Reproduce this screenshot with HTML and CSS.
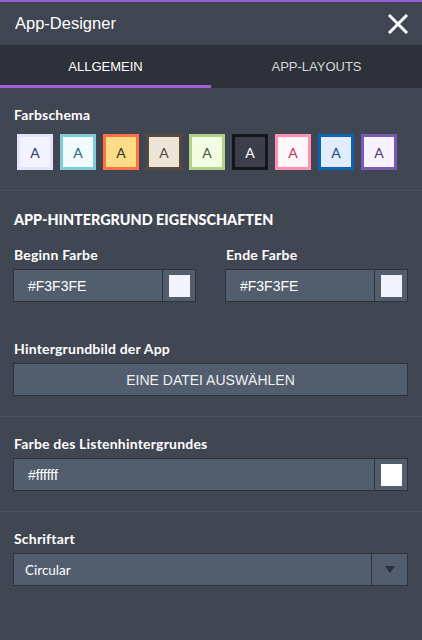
FILE: index.html
```html
<!DOCTYPE html>
<html>

<head>
  <title>App-Designer</title>
  <link rel="stylesheet" href="styles.css">
</head>

<body>
  <div class="panel">
    <div class="header">
      <span class="title">App-Designer</span>
      <button class="close-btn" aria-label="Schließen">
        <svg width="20" height="20" viewBox="0 0 20 20">
          <path d="M2 2 L18 18 M18 2 L2 18" stroke="#fff" stroke-width="3" stroke-linecap="square" fill="none"/>
        </svg>
      </button>
    </div>

    <div class="tabs">
      <div class="tab active">ALLGEMEIN</div>
      <div class="tab">APP-LAYOUTS</div>
    </div>

    <div class="section">
      <div class="label">Farbschema</div>
      <div class="schemes">
        <div class="scheme s1">A</div>
        <div class="scheme s2">A</div>
        <div class="scheme s3">A</div>
        <div class="scheme s4">A</div>
        <div class="scheme s5">A</div>
        <div class="scheme s6">A</div>
        <div class="scheme s7">A</div>
        <div class="scheme s8">A</div>
        <div class="scheme s9">A</div>
      </div>
    </div>

    <div class="section">
      <div class="heading">APP-HINTERGRUND EIGENSCHAFTEN</div>
      <div class="row">
        <div class="form-group">
          <div class="label">Beginn Farbe</div>
          <div class="color-input">
            <span class="value">#F3F3FE</span>
            <span class="swatch-box"><span class="swatch" style="background:#f3f3fe"></span></span>
          </div>
        </div>
        <div class="form-group">
          <div class="label">Ende Farbe</div>
          <div class="color-input">
            <span class="value">#F3F3FE</span>
            <span class="swatch-box"><span class="swatch" style="background:#f3f3fe"></span></span>
          </div>
        </div>
      </div>
      <div class="form-group spaced">
        <div class="label">Hintergrundbild der App</div>
        <button class="file-btn">EINE DATEI AUSWÄHLEN</button>
      </div>
    </div>

    <div class="section">
      <div class="label">Farbe des Listenhintergrundes</div>
      <div class="color-input">
        <span class="value">#ffffff</span>
        <span class="swatch-box"><span class="swatch" style="background:#ffffff"></span></span>
      </div>
    </div>

    <div class="section last">
      <div class="label">Schriftart</div>
      <div class="select">
        <span class="select-value">Circular</span>
        <span class="select-arrow"></span>
      </div>
    </div>
  </div>
</body>

</html>
```

FILE: styles.css
```css
/* App-Designer Seitenleiste */
html, body {
  margin: 0;
  padding: 0;
}

body {
  background-color: #404652;
  font-family: "Liberation Sans", Arial, sans-serif;
  color: #fff;
  width: 422px;
  height: 640px;
  overflow: hidden;
}

.header {
  height: 43px;
  border-top: 2px solid #9c5bd6;
  background-color: #3f4551;
  display: flex;
  align-items: center;
  justify-content: space-between;
  padding: 0 14px 0 15px;
}

.title {
  font-size: 16.5px;
}

.close-btn {
  background: none;
  border: none;
  padding: 0;
  width: 20px;
  height: 20px;
  cursor: pointer;
}

.tabs {
  display: flex;
  height: 43px;
  background-color: #2e3139;
}

.tab {
  flex: 1;
  display: flex;
  align-items: center;
  justify-content: center;
  font-size: 13px;
  color: #d4d6db;
  border-bottom: 3px solid transparent;
  padding-top: 2px;
}

.tab.active {
  color: #fff;
  border-bottom-color: #a35fd6;
}

.section {
  padding: 19px 14px 20px 13px;
  border-bottom: 1px solid #4b515d;
}

.section.last {
  border-bottom: none;
}

.label {
  font-family: Lato, "Open Sans", sans-serif;
  font-weight: bold;
  font-size: 14px;
  line-height: 16px;
  letter-spacing: 0.2px;
  margin-left: 1px;
  margin-bottom: 6px;
}

.heading {
  font-family: Lato, "Open Sans", sans-serif;
  font-weight: 900;
  font-size: 14.4px;
  line-height: 16px;
  margin-left: 1px;
  margin-top: 2px;
  margin-bottom: 19px;
}

.schemes {
  display: flex;
  gap: 7px;
  margin-left: 4px;
  margin-top: 11px;
}

.scheme {
  width: 30px;
  height: 30px;
  border: 3px solid;
  display: flex;
  align-items: center;
  justify-content: center;
  font-family: Lato, sans-serif;
  font-size: 14px;
}

.s1 { border-color: #e3e3fb; background: #f3f3fe; color: #2d3a80; }
.s2 { border-color: #7ecbdc; background: #f0fbff; color: #2a6478; }
.s3 { border-color: #ff7241; background: #ffdd87; color: #333; }
.s4 { border-color: #574940; background: #ede5d6; color: #574940; }
.s5 { border-color: #b3d18b; background: #f2fde3; color: #4a5a3a; }
.s6 { border-color: #14161c; background: #3a3f4b; color: #fff; }
.s7 { border-color: #ff90b0; background: #fff6fa; color: #c0365e; }
.s8 { border-color: #0c61b3; background: #e2ecfb; color: #0c4c8a; }
.s9 { border-color: #7a58b8; background: #f8f2ff; color: #4b3a7a; }

.row {
  display: flex;
  gap: 29px;
}

.row .form-group {
  flex: 1;
}

.form-group.spaced {
  margin-top: 39px;
}

.color-input {
  display: flex;
  height: 31px;
  border: 1px solid #2e323a;
  background-color: #525e6e;
}

.color-input .value {
  flex: 1;
  display: flex;
  align-items: center;
  padding-left: 14px;
  font-size: 14px;
}

.swatch-box {
  width: 32px;
  border-left: 1px solid #2e323a;
  display: flex;
  align-items: center;
  justify-content: center;
}

.swatch {
  width: 21px;
  height: 22px;
}

.file-btn {
  display: block;
  width: 100%;
  height: 33px;
  border: 1px solid #2e323a;
  background-color: #525e6e;
  color: #eef0f2;
  font-family: "Liberation Sans", Arial, sans-serif;
  font-size: 14px;
  cursor: pointer;
}

.select {
  display: flex;
  height: 31px;
  border: 1px solid #2e323a;
  background-color: #525e6e;
}

.select-value {
  flex: 1;
  display: flex;
  align-items: center;
  padding-left: 11px;
  font-family: Lato, sans-serif;
  font-size: 13.5px;
}

.select-arrow {
  width: 35px;
  border-left: 1px solid #2e323a;
  display: flex;
  align-items: center;
  justify-content: center;
}

.select-arrow::after {
  content: "";
  border-left: 5px solid transparent;
  border-right: 5px solid transparent;
  border-top: 7px solid #2e323a;
}
```
